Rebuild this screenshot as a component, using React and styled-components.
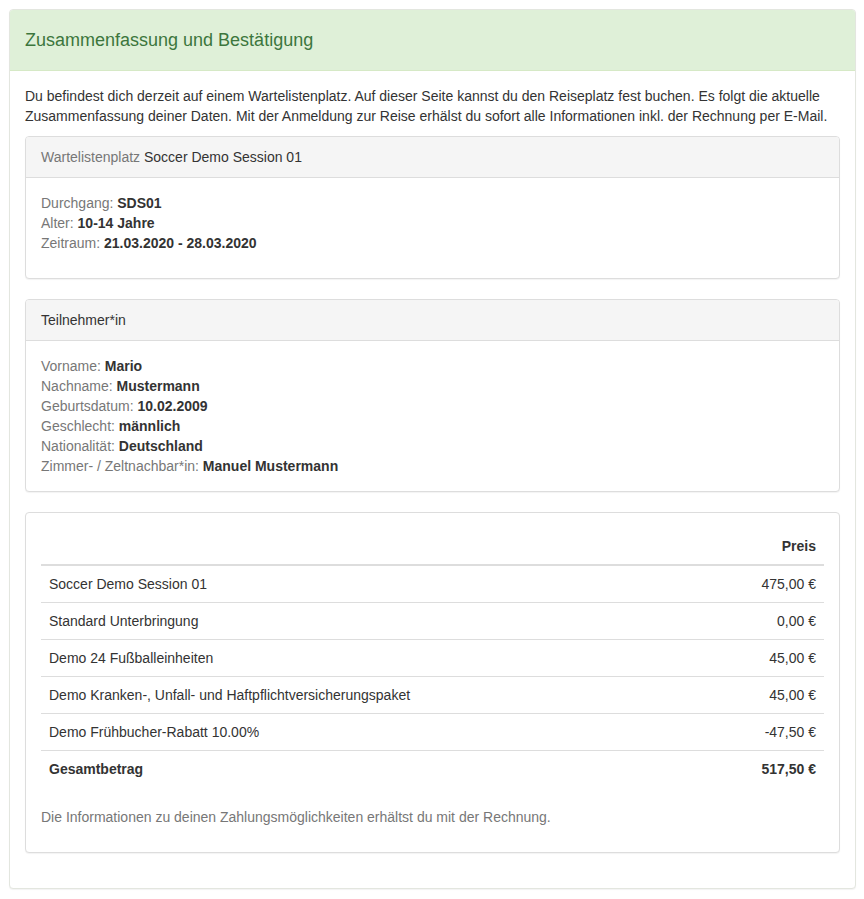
import React from "react";
import styled, { createGlobalStyle } from "styled-components";

const GlobalStyle = createGlobalStyle`
  html, body {
    margin: 0;
    padding: 0;
    background: #fff;
  }
  body {
    font-family: "Liberation Sans", Arial, sans-serif;
    font-size: 14px;
    line-height: 20px;
    color: #333;
  }
  * {
    box-sizing: border-box;
  }
`;

const Page = styled.div`
  padding: 9px 8px 10px 9px;
`;

const Panel = styled.div`
  background: #fff;
  border: 1px solid ${(p) => p.$border || "#ddd"};
  border-radius: 4px;
  box-shadow: 0 1px 1px rgba(0, 0, 0, 0.05);
  margin-bottom: ${(p) => (p.$last ? "0" : "20px")};
`;

const SuccessHeading = styled.div`
  background: #dff0d8;
  color: #3c763d;
  border-bottom: 1px solid #d6e9c6;
  border-radius: 3px 3px 0 0;
  padding: 20px 15px;
`;

const Title = styled.h3`
  margin: 0;
  font-size: 18px;
  font-weight: normal;
  line-height: 20px;
`;

const Heading = styled.div`
  background: #f5f5f5;
  border-bottom: 1px solid #ddd;
  border-radius: 3px 3px 0 0;
  padding: 10px 15px;
  color: #333;
`;

const Muted = styled.span`
  color: #777;
`;

const Body = styled.div`
  padding: 15px;
`;

const Intro = styled.p`
  margin: 0 0 10px;
`;

const InfoList = styled.div`
  margin-bottom: ${(p) => (p.$gap ? "10px" : "0")};
`;

const InfoRow = styled.div`
  color: #777;
  b {
    color: #333;
  }
`;

const Table = styled.table`
  width: 100%;
  border-collapse: collapse;
  border-spacing: 0;
  margin-bottom: 20px;
`;

const Th = styled.th`
  padding: 8px;
  line-height: 20px;
  text-align: ${(p) => (p.$right ? "right" : "left")};
  border-bottom: 2px solid #ddd;
  font-weight: bold;
`;

const Td = styled.td`
  padding: 8px;
  line-height: 20px;
  text-align: ${(p) => (p.$right ? "right" : "left")};
  border-top: 1px solid #ddd;
  font-weight: ${(p) => (p.$bold ? "bold" : "normal")};
`;

const Note = styled.p`
  margin: 0 0 10px;
  color: #777;
`;

const items = [
  ["Soccer Demo Session 01", "475,00 €"],
  ["Standard Unterbringung", "0,00 €"],
  ["Demo 24 Fußballeinheiten", "45,00 €"],
  ["Demo Kranken-, Unfall- und Haftpflichtversicherungspaket", "45,00 €"],
  ["Demo Frühbucher-Rabatt 10.00%", "-47,50 €"],
];

const Info = ({ label, value }) => (
  <InfoRow>
    {label}: <b>{value}</b>
  </InfoRow>
);

export default function App() {
  return (
    <>
      <GlobalStyle />
      <Page>
        <Panel $border="#e3e6df" $last>
          <SuccessHeading>
            <Title>Zusammenfassung und Bestätigung</Title>
          </SuccessHeading>
          <Body>
            <Intro>
              Du befindest dich derzeit auf einem Wartelistenplatz. Auf dieser Seite kannst du den
              Reiseplatz fest buchen. Es folgt die aktuelle Zusammenfassung deiner Daten. Mit der
              Anmeldung zur Reise erhälst du sofort alle Informationen inkl. der Rechnung per E-Mail.
            </Intro>

            <Panel>
              <Heading>
                <Muted>Wartelistenplatz</Muted> Soccer Demo Session 01
              </Heading>
              <Body>
                <InfoList $gap>
                  <Info label="Durchgang" value="SDS01" />
                  <Info label="Alter" value="10-14 Jahre" />
                  <Info label="Zeitraum" value="21.03.2020 - 28.03.2020" />
                </InfoList>
              </Body>
            </Panel>

            <Panel>
              <Heading>Teilnehmer*in</Heading>
              <Body>
                <InfoList>
                  <Info label="Vorname" value="Mario" />
                  <Info label="Nachname" value="Mustermann" />
                  <Info label="Geburtsdatum" value="10.02.2009" />
                  <Info label="Geschlecht" value="männlich" />
                  <Info label="Nationalität" value="Deutschland" />
                  <Info label="Zimmer- / Zeltnachbar*in" value="Manuel Mustermann" />
                </InfoList>
              </Body>
            </Panel>

            <Panel>
              <Body>
                <Table>
                  <thead>
                    <tr>
                      <Th></Th>
                      <Th $right>Preis</Th>
                    </tr>
                  </thead>
                  <tbody>
                    {items.map(([name, price]) => (
                      <tr key={name}>
                        <Td>{name}</Td>
                        <Td $right>{price}</Td>
                      </tr>
                    ))}
                    <tr>
                      <Td $bold>Gesamtbetrag</Td>
                      <Td $right $bold>
                        517,50 €
                      </Td>
                    </tr>
                  </tbody>
                </Table>
                <Note>Die Informationen zu deinen Zahlungsmöglichkeiten erhältst du mit der Rechnung.</Note>
              </Body>
            </Panel>
          </Body>
        </Panel>
      </Page>
    </>
  );
}
